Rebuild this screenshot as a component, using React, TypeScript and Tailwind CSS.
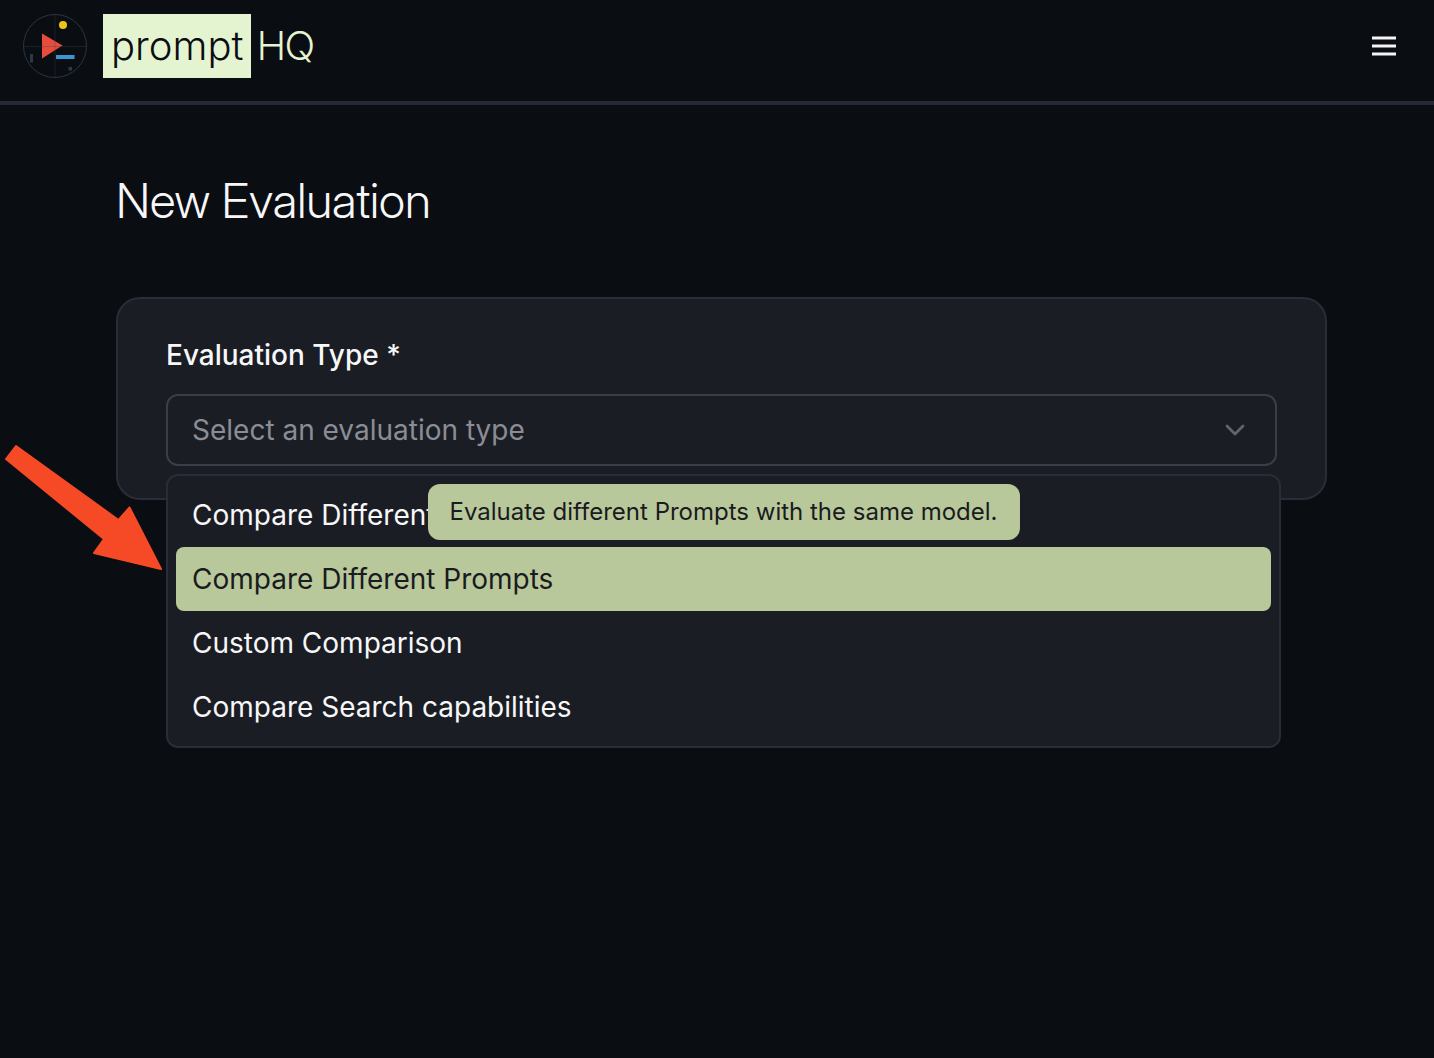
import React, { FC } from 'react';
import { ChevronDown } from 'lucide-react';

type Option = {
    value: string;
    label: string;
    tooltip?: string;
}

const options: Option[] = [
    { value: 'models', label: 'Compare Different Models' },
    {
        value: 'prompts',
        label: 'Compare Different Prompts',
        tooltip: 'Evaluate different Prompts with the same model.'
    },
    { value: 'custom', label: 'Custom Comparison' },
    { value: 'search', label: 'Compare Search capabilities' },
];

const Logo: FC = () => (
    <svg className="size-16" viewBox="0 0 64 64" fill="none" aria-hidden="true">
        <circle cx="32" cy="32" r="31.5" stroke="#2c3544" />
        <path d="M19 19.5 39.500 31.5 19 44.5Z" fill="#e64c3c" />
        <path d="M1 32.5H63M32 1V63" stroke="#3b4654" strokeOpacity="0.35" />
        <circle cx="40" cy="11" r="4" fill="#f0c413" />
        <rect x="33" y="41" width="18.500" height="4" fill="#3b95d3" />
        <rect x="7" y="40" width="3" height="8.500" fill="#2c3947" />
        <rect x="45.500" y="53" width="3.500" height="3.500" fill="#2c3947" />
    </svg>
);

const Header: FC = () => (
    <header className="flex items-center justify-between border-b-4 border-[#262833] pt-[14px] pb-[23px] pl-[23px] pr-[30px]">
        <a href="#" className="flex items-center text-[40px] leading-[64px] font-light">
            <Logo />
            <span className="ml-4 bg-[#e4f3d0] px-2 text-[#0a0d12]">prompt</span>
            <span className="px-1.5 font-['Inter_Display','Inter',sans-serif] text-[#e4f3d0]">HQ</span>
        </a>
        <button type="button" aria-label="Open menu" className="p-1">
            <svg className="size-8" viewBox="0 0 32 32" fill="none" stroke="#f4f4f6" strokeWidth="3" aria-hidden="true">
                <path d="M4 8H28M4 16H28M4 24H28" />
            </svg>
        </button>
    </header>
);

const OptionItem: FC<{ option: Option; active: boolean }> = ({ option, active }) => (
    <li
        role="option"
        aria-selected={active}
        className={
            active
                ? 'relative rounded-lg bg-[#b9c89b] px-4 text-[#191b20]'
                : 'relative rounded-lg px-4 text-[#f7f7f8]'
        }
    >
        {option.label}
        {
            option.tooltip &&
            <div
                role="tooltip"
                className="absolute bottom-full left-1/2 mb-[7px] -translate-x-1/2 rounded-xl bg-[#b9c89b] px-[22px] text-2xl leading-[56px] whitespace-nowrap text-[#191b20]"
            >
                {option.tooltip}
            </div>
        }
    </li>
);

const Arrow: FC = () => (
    <svg
        className="absolute top-[444px] left-1 h-32 w-40"
        viewBox="4 444 160 128"
        fill="#f64a26"
        stroke="#f64a26"
        strokeWidth="2"
        strokeLinejoin="round"
        aria-hidden="true"
    >
        <path d="M16 446 118.500 520 129.500 507.500 161 569 94 553 104 539 6 459Z" />
    </svg>
);

export default function App() {
    return (
        <div className="relative min-h-screen bg-[#0a0d12] font-['Inter',sans-serif] text-[28px]">
            <Header />
            <main className="pt-16 pr-[107px] pl-[116px]">
                <h1 className="font-['Inter_Display','Inter',sans-serif] text-5xl leading-[64px] font-light text-[#f7f7f8]">New Evaluation</h1>
                <div className="mt-16 rounded-3xl border-2 border-[#2a2c37] bg-[#1b1d25] px-12 pt-9 pb-8">
                    <label htmlFor="evaluation-type" className="block leading-10 font-medium text-[#f7f7f8]">
                        Evaluation Type *
                    </label>
                    <div className="relative mt-[19px]">
                        <select
                            id="evaluation-type"
                            defaultValue=""
                            className="block h-[72px] w-full appearance-none rounded-xl border-2 border-[#3b3e4a] bg-transparent px-6 text-[#8b8d95]"
                        >
                            <option value="" disabled>Select an evaluation type</option>
                            {options.map((option) => (
                                <option key={option.value} value={option.value}>{option.label}</option>
                            ))}
                        </select>
                        <ChevronDown className="pointer-events-none absolute top-5 right-[26px] size-8 text-[#63656e]" />
                        <ul
                            role="listbox"
                            aria-label="Evaluation types"
                            className="absolute top-full left-0 -right-1 z-10 mt-2 rounded-xl border-2 border-[#2a2c37] bg-[#1b1d25] px-2 py-[7px] leading-[64px]"
                        >
                            {options.map((option) => (
                                <OptionItem
                                    key={option.value}
                                    option={option}
                                    active={option.value === 'prompts'}
                                />
                            ))}
                        </ul>
                    </div>
                </div>
            </main>
            <Arrow />
        </div>
    );
};
